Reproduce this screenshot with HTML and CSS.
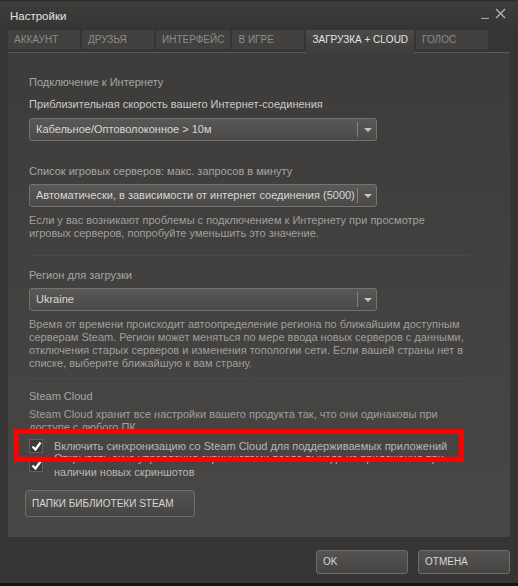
FILE: index.html
```html
<!doctype html>
<html>

<head>
  <meta charset="UTF-8">
  <title>Настройки</title>
  <link rel="stylesheet" href="styles.css">
</head>

<body>
  <div class="window">
    <div class="titlebar">
      <span class="title">Настройки</span>
      <span class="controls">
        <svg width="11" height="11" viewBox="0 0 11 11"><path d="M1 10.5h8" stroke="#aaa" stroke-width="1.2"/></svg>
        <svg width="11" height="11" viewBox="0 0 11 11"><path d="M1 1l9 9M10 1l-9 9" stroke="#b4b4b4" stroke-width="1.4"/></svg>
      </span>
    </div>

    <div class="tabs">
      <div class="tab">АККАУНТ</div>
      <div class="tab">ДРУЗЬЯ</div>
      <div class="tab">ИНТЕРФЕЙС</div>
      <div class="tab">В ИГРЕ</div>
      <div class="tab active">ЗАГРУЗКА + CLOUD</div>
      <div class="tab">ГОЛОС</div>
    </div>

    <div class="panel">
      <div class="heading first">Подключение к Интернету</div>
      <div class="label">Приблизительная скорость вашего Интернет-соединения</div>
      <div class="dropdown"><span>Кабельное/Оптоволоконное &gt; 10м</span><i class="arrow"></i></div>

      <div class="heading second">Список игровых серверов: макс. запросов в минуту</div>
      <div class="dropdown narrow"><span>Автоматически, в зависимости от интернет соединения (5000)</span><i class="arrow"></i></div>
      <p class="desc">Если у вас возникают проблемы с подключением к Интернету при просмотре игровых серверов, попробуйте уменьшить это значение.</p>

      <hr class="sep sep-1">

      <div class="heading">Регион для загрузки</div>
      <div class="dropdown narrow"><span>Ukraine</span><i class="arrow"></i></div>
      <p class="desc">Время от времени происходит автоопределение региона по ближайшим доступным серверам Steam. Регион может меняться по мере ввода новых серверов с данными, отключения старых серверов и изменения топологии сети. Если вашей страны нет в списке, выберите ближайшую к вам страну.</p>

      <hr class="sep sep-2">

      <div class="heading cloud">Steam Cloud</div>
      <p class="desc cloud-desc">Steam Cloud хранит все настройки вашего продукта так, что они одинаковы при доступе с любого ПК.</p>

      <label class="check first-check">
        <span class="box"><svg width="11" height="11" viewBox="0 0 11 11"><path d="M1.5 5.5l3 3 5-7" fill="none" stroke="#fff" stroke-width="2.2"/></svg></span>
        <span class="check-text">Включить синхронизацию со Steam Cloud для поддерживаемых приложений</span>
        <span class="highlight"></span>
      </label>
      <label class="check second-check">
        <span class="box"><svg width="11" height="11" viewBox="0 0 11 11"><path d="M1.5 5.5l3 3 5-7" fill="none" stroke="#fff" stroke-width="2.2"/></svg></span>
        <span class="check-text">Открывать окно управления скриншотами после выхода из приложения при наличии новых скриншотов</span>
      </label>

      <button class="btn library">ПАПКИ БИБЛИОТЕКИ STEAM</button>
    </div>

    <div class="footer">
      <button class="btn action">OK</button>
      <button class="btn action">ОТМЕНА</button>
    </div>
  </div>
</body>

</html>
```

FILE: styles.css
```css
body {
  margin: 0;
  background: #353432;
  font: normal 11px/14px "Liberation Sans", Arial, sans-serif;
  color: #c9c8c6;
}

.window {
  width: 518px;
  height: 586px;
  box-sizing: border-box;
  background: #363533;
  border-bottom: 3px solid #151515;
  overflow: hidden;
}

.titlebar {
  height: 30px;
  display: flex;
  align-items: center;
  justify-content: space-between;
  padding: 0 12px 0 10px;
  background: linear-gradient(#282726 0, #3d3c3a 2px, #363533 30px);
}

.title {
  font-size: 11.5px;
  color: #e2e2e2;
  margin-top: 1px;
}

.controls {
  display: flex;
  gap: 4px;
  margin-top: -4px;
}

/* tabs */
.tabs {
  display: flex;
  align-items: flex-start;
  gap: 2px;
  margin: 0 8px;
  height: 23px;
  background: linear-gradient(to top, #5b5957 1px, transparent 1px);
}

.tab {
  min-width: 60px;
  height: 19px;
  padding: 0 6px;
  background: #42413f;
  color: #8d8c8a;
  font-size: 10px;
  line-height: 20px;
  white-space: nowrap;
}

.tab.active {
  height: 23px;
  background: linear-gradient(#4c4b49, #3e3d3b);
  color: #e4e4e4;
}

/* main panel */
.panel {
  margin: 0 8px;
  padding: 22px 40px 20px 21px;
  background: linear-gradient(#3d3c3a, #484745);
}

.heading {
  color: #a6a5a3;
  margin-top: 12px;
}

.heading.first {
  margin-top: 0;
}

.heading.second {
  margin-top: 23px;
}

.heading.cloud {
  margin-top: 10px;
}

.label {
  margin-top: 8px;
  color: #cbcac8;
}

.dropdown {
  position: relative;
  width: 340px;
  height: 21px;
  margin-top: 7px;
  padding-left: 6px;
  border: 1px solid #75736f;
  border-radius: 3px;
  background: linear-gradient(#5a5856, #4b4947);
  color: #d8d7d5;
  line-height: 21px;
}

.dropdown.narrow {
  margin-top: 6px;
}

.dropdown span {
  display: block;
}

.arrow {
  position: absolute;
  right: 0;
  top: 3px;
  width: 18px;
  height: 15px;
  border-left: 1px solid #858381;
}

.arrow::after {
  content: "";
  position: absolute;
  left: 6px;
  top: 6px;
  border-left: 4px solid transparent;
  border-right: 4px solid transparent;
  border-top: 4px solid #c6c5c3;
}

.desc {
  max-width: 436px;
  margin: 7px 0 0;
  color: #a09f9d;
  line-height: 13px;
}

.cloud-desc {
  margin-top: 5px;
}

.sep {
  border: 0;
  height: 1px;
  background: #4b4947;
  margin: 15px 0 0;
}

.sep-2 {
  margin-top: 8px;
}

/* checkboxes */
.check {
  position: relative;
  display: flex;
  align-items: center;
  gap: 11px;
  color: #b8b7b5;
}

.first-check {
  margin-top: 5px;
}

.second-check {
  margin-top: -2px;
}

.box {
  flex: none;
  width: 12px;
  height: 12px;
  border: 1px solid #62605e;
  background: #3b3a38;
  display: flex;
  align-items: center;
  justify-content: center;
}

.highlight {
  position: absolute;
  left: -15px;
  top: -10px;
  width: 440px;
  height: 23px;
  border: 5px solid #ff0000;
  z-index: 1;
}

/* buttons */
.btn {
  font: 10px/14px "Liberation Sans", Arial, sans-serif;
  color: #d8d7d5;
  text-align: left;
  border: 1px solid #706e6b;
  border-radius: 3px;
  background: linear-gradient(#555351, #474543);
  padding: 0 6px;
}

.library {
  display: block;
  margin: 11px 0 0 -4px;
  width: 170px;
  height: 27px;
}

.footer {
  display: flex;
  justify-content: flex-end;
  gap: 10px;
  padding: 13px 8px 0;
}

.action {
  width: 92px;
  height: 24px;
}
```
